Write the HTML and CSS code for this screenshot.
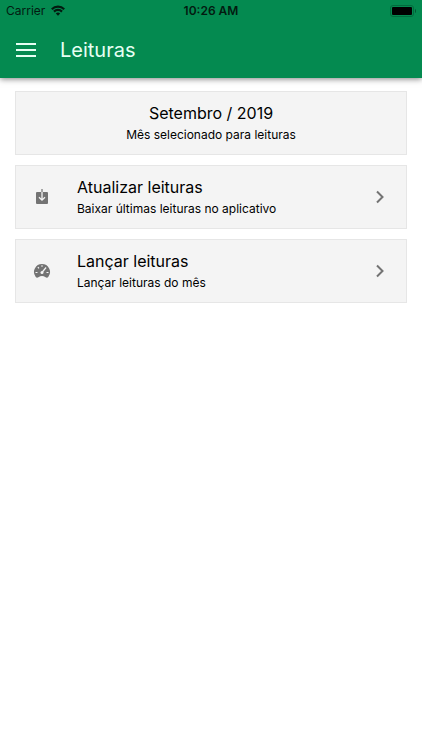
FILE: index.html
```html
<!DOCTYPE html>
<html lang="pt-BR">
<head>
<meta charset="UTF-8">
<meta name="viewport" content="width=device-width, initial-scale=1">
<title>Leituras</title>
<link rel="stylesheet" href="styles.css">
</head>
<body>
<header class="header">
    <div class="status">
        <div class="carrier">
            <span>Carrier</span>
            <svg class="wifi" viewBox="0 0 14 11" aria-hidden="true">
                <path d="M.8 4.2a8.8 8.8 0 0 1 12.4 0M3 6.6a5.7 5.7 0 0 1 8 0" fill="none" stroke="currentColor" stroke-width="2.2"/>
                <path d="M7 10.8L4.8 8.6a3.1 3.1 0 0 1 4.4 0z" fill="currentColor"/>
            </svg>
        </div>
        <time class="clock">10:26 AM</time>
        <svg class="battery" viewBox="0 0 26 12" aria-hidden="true">
            <rect x="0.5" y="0.5" width="23" height="11" rx="2.5" fill="none" stroke="#026b3d"/>
            <rect x="2" y="2" width="20" height="8" rx="1" fill="#000"/>
            <path d="M25 4v4c1.2-.5 1.2-3.5 0-4z" fill="#024f2e"/>
        </svg>
    </div>
    <div class="toolbar">
        <button class="menu" type="button" aria-label="Menu">
            <svg viewBox="0 0 20 14" aria-hidden="true">
                <path d="M0 1h20M0 7h20M0 13h20" stroke="currentColor" stroke-width="2"/>
            </svg>
        </button>
        <h1>Leituras</h1>
    </div>
</header>
<main class="content">
    <section class="card month">
        <h2>Setembro / 2019</h2>
        <p>Mês selecionado para leituras</p>
    </section>
    <a class="card item" href="#atualizar">
        <svg class="icon" viewBox="0 0 18 18" aria-hidden="true">
            <rect x="3" y="4" width="12" height="12" rx="1" fill="#737373"/>
            <path d="M9 1v3" stroke="#8c8c8c" stroke-width="1.5"/>
            <path d="M9 4v8M6 9.2l3 3 3-3" fill="none" stroke="#f4f4f4" stroke-width="1.3"/>
        </svg>
        <div class="text">
            <h2>Atualizar leituras</h2>
            <p>Baixar últimas leituras no aplicativo</p>
        </div>
        <svg class="arrow" viewBox="0 0 8 14" aria-hidden="true">
            <path d="M1 1.5L6.5 7 1 12.5" fill="none" stroke="currentColor" stroke-width="2"/>
        </svg>
    </a>
    <a class="card item" href="#lancar">
        <svg class="icon" viewBox="0 0 18 18" aria-hidden="true">
            <path d="M9 2a8 8 0 0 0-6.4 12.8c.7 1 1.8 1.1 2.8.5a6.5 6.5 0 0 1 7.2 0c1 .6 2.1.5 2.8-.5A8 8 0 0 0 9 2z" fill="#737373"/>
            <path d="M9 3.2v1.6M4.9 5l1 1.3M2.5 10.5h2M13.5 10.5h2M13.1 5.5L9.3 10" stroke="#f4f4f4" stroke-width="1.2"/>
            <circle cx="9" cy="10.4" r="1.5" fill="#f4f4f4"/>
        </svg>
        <div class="text">
            <h2>Lançar leituras</h2>
            <p>Lançar leituras do mês</p>
        </div>
        <svg class="arrow" viewBox="0 0 8 14" aria-hidden="true">
            <path d="M1 1.5L6.5 7 1 12.5" fill="none" stroke="currentColor" stroke-width="2"/>
        </svg>
    </a>
</main>
</body>
</html>
```
FILE: styles.css
```css
* {
    box-sizing: border-box;
}
body {
    margin: 0;
    background: #fff;
    color: #000;
    font-family: Inter, sans-serif;
}
h1, h2, p {
    margin: 0;
    font-weight: 400;
}

.header {
    background: #048a50;
    box-shadow: 0 1px 6px rgba(0, 0, 0, 0.5);
}
.status {
    display: grid;
    grid-template-columns: 1fr auto 1fr;
    align-items: center;
    height: 21px;
    padding: 0 6px;
    color: #031b10;
    font-size: 12px;
}
.carrier {
    display: flex;
    align-items: center;
    gap: 6px;
}
.wifi {
    width: 14px;
    height: 11px;
}
.clock {
    font-weight: 600;
}
.battery {
    width: 26px;
    height: 12px;
    justify-self: end;
}
.toolbar {
    display: flex;
    align-items: center;
    gap: 24px;
    height: 57px;
    padding: 0 16px;
    color: #e6fff3;
}
.menu {
    padding: 0;
    border: 0;
    background: none;
    color: inherit;
}
.menu svg {
    display: block;
    width: 20px;
    height: 14px;
}
.toolbar h1 {
    font-size: 20px;
    line-height: 24px;
}

.content {
    display: flex;
    flex-direction: column;
    gap: 10px;
    padding: 13px 15px;
}
.card {
    padding: 9px 10px 10px;
    border: 1px solid #e6e6e6;
    background: #f4f4f4;
    color: inherit;
    text-decoration: none;
}
.card h2 {
    margin-bottom: 1px;
    font-size: 16px;
    line-height: 24px;
}
.card p {
    font-size: 12px;
    line-height: 18px;
}
.month {
    text-align: center;
}
.item {
    display: flex;
    align-items: center;
    padding-right: 22px;
    padding-left: 17px;
}
.icon {
    width: 18px;
    height: 18px;
    margin-right: 26px;
}
.text {
    flex: 1;
}
.arrow {
    width: 8px;
    height: 14px;
    color: #737373;
}
```
